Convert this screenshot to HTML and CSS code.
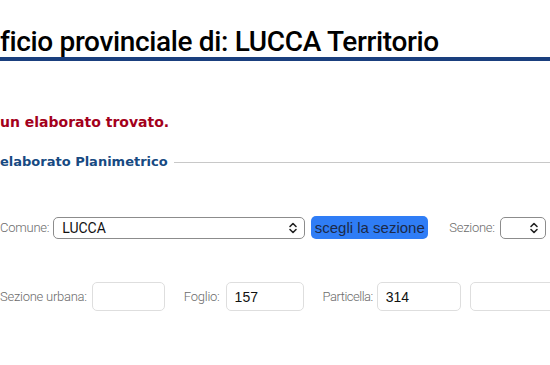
FILE: index.html
```html
<!DOCTYPE html>
<html lang="it">
<head>
   <meta charset="UTF-8">
   <meta name="viewport" content="width=device-width, initial-scale=1.0">
   <title>Elaborato Planimetrico</title>
   <link rel="stylesheet" href="styles.css">
</head>
<body>
   <div id="page">
      <h1 class="title">ficio provinciale di: LUCCA Territorio</h1>

      <p class="esito">un elaborato trovato.</p>

      <div class="sezione-head">
         <h3>elaborato Planimetrico</h3>
         <span class="rule"></span>
      </div>

      <form class="ricerca">
         <div class="riga riga-comune">
            <label>Comune:</label>
            <div class="select comune">
               <span>LUCCA</span>
               <svg width="10" height="14" viewBox="0 0 10 14"><path d="M2 5.5 L5 2.5 L8 5.5 M2 8.5 L5 11.5 L8 8.5" fill="none" stroke="#222" stroke-width="1.6" stroke-linecap="round" stroke-linejoin="round"/></svg>
            </div>
            <button type="button" class="btn-sezione">scegli la sezione</button>
            <label class="lbl-sezione">Sezione:</label>
            <div class="select sezione">
               <span></span>
               <svg width="10" height="14" viewBox="0 0 10 14"><path d="M2 5.5 L5 2.5 L8 5.5 M2 8.5 L5 11.5 L8 8.5" fill="none" stroke="#222" stroke-width="1.6" stroke-linecap="round" stroke-linejoin="round"/></svg>
            </div>
         </div>

         <div class="riga riga-dati">
            <label class="lbl-urbana">Sezione urbana:</label>
            <input type="text" class="campo urbana" value="">
            <label class="lbl-foglio">Foglio:</label>
            <input type="text" class="campo foglio" value="157">
            <label class="lbl-part">Particella:</label>
            <input type="text" class="campo particella" value="314">
            <input type="text" class="campo sub" value="">
         </div>
      </form>
   </div>
</body>
</html>
```

FILE: styles.css
```css
body {
   margin: 0;
   background: #ffffff;
   overflow: hidden;
}

#page {
   padding-top: 27px;
}

.title {
   margin: 0;
   font-family: "Roboto", sans-serif;
   font-weight: 500;
   font-size: 28px;
   line-height: 30px;
   color: #000000;
   border-bottom: 4px solid #1a3f7e;
   letter-spacing: -0.35px;
   white-space: nowrap;
}

.esito {
   margin: 53px 0 0 0;
   font-family: "DejaVu Sans", sans-serif;
   font-weight: bold;
   font-size: 14px;
   line-height: 16px;
   color: #a3001b;
}

.sezione-head {
   display: flex;
   align-items: center;
   gap: 6px;
   margin-top: 24px;
}

.sezione-head h3 {
   margin: 0;
   font-family: "DejaVu Sans", sans-serif;
   font-weight: bold;
   font-size: 13px;
   line-height: 16px;
   color: #174a82;
}

.rule {
   flex: 1;
   height: 1px;
   background: #c8c8c8;
}

.ricerca {
   margin-top: 46px;
   font-family: "Roboto", sans-serif;
}

.riga {
   display: flex;
   align-items: center;
}

.riga label {
   flex-shrink: 0;
   white-space: nowrap;
   font-weight: 300;
   font-size: 13px;
   letter-spacing: -0.25px;
   color: #6c6c6c;
   margin-right: 4px;
}

.select {
   flex-shrink: 0;
   box-sizing: border-box;
   height: 22px;
   border: 1px solid #8c8c8c;
   border-radius: 5px;
   display: flex;
   align-items: center;
   justify-content: space-between;
   padding: 0 6px 0 8px;
   font-size: 14px;
   color: #111111;
}

.comune {
   width: 252px;
}

.sezione {
   width: 46px;
}

.btn-sezione {
   flex-shrink: 0;
   margin-left: 6px;
   height: 23px;
   width: 117px;
   border: none;
   border-radius: 5px;
   background: #2f7df6;
   color: #1c2a48;
   font-family: "Liberation Sans", sans-serif;
   font-size: 15px;
   padding: 0;
}

.riga .lbl-sezione {
   margin-left: 21px;
   margin-right: 5px;
}

.riga-dati {
   margin-top: 43px;
}

.campo {
   flex-shrink: 0;
   box-sizing: border-box;
   height: 29px;
   border: 1px solid #dedede;
   border-radius: 5px;
   font-family: "Liberation Sans", sans-serif;
   font-size: 14px;
   color: #111111;
   padding: 0 8px;
   margin: 0;
   outline: none;
}

.urbana {
   width: 73px;
}

.foglio {
   width: 78px;
}

.particella {
   width: 84px;
}

.sub {
   width: 90px;
   margin-left: 9px;
}

.riga .lbl-urbana {
   margin-right: 5px;
}

.riga .lbl-foglio {
   margin-left: 19px;
   margin-right: 6px;
}

.riga .lbl-part {
   margin-left: 19px;
   margin-right: 4px;
   letter-spacing: -0.5px;
}
```
